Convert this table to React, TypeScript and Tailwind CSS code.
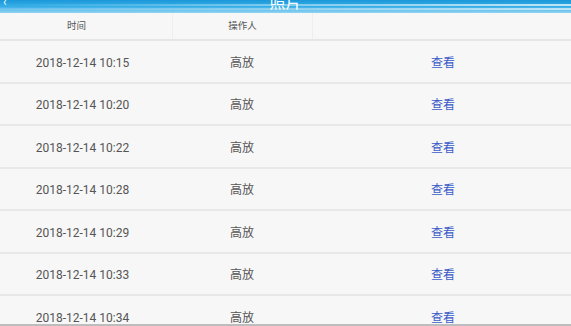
const records = [
  "2018-12-14 10:15",
  "2018-12-14 10:20",
  "2018-12-14 10:22",
  "2018-12-14 10:28",
  "2018-12-14 10:29",
  "2018-12-14 10:33",
  "2018-12-14 10:34",
];

export default function App() {
  return (
    <div className="w-[571px] h-[326px] flex flex-col bg-[#f7f7f7] overflow-hidden font-['Roboto','Noto_Sans_CJK_SC',sans-serif]">
      {/* Title bar (scrolled mostly off screen) */}
      <div className="relative h-[13px] shrink-0 overflow-hidden bg-gradient-to-b from-[#1b98da] via-[#33aee6] to-[#8fd3f2]">
        <div className="absolute inset-x-0 top-[4px] h-[2px] bg-gradient-to-r from-transparent via-white/40 to-white/70" />
        <div className="absolute inset-x-0 top-[8px] h-[2px] bg-gradient-to-r from-white/10 via-white/30 to-white/60" />
        <div className="absolute left-[3px] -top-[4px] text-white text-[12px] leading-none">‹</div>
        <div className="absolute inset-x-0 bottom-[1px] flex justify-center">
          <span className="text-white text-[16px] leading-none translate-y-[-1px]">照片</span>
        </div>
      </div>

      {/* Table header */}
      <div className="flex h-[28px] shrink-0 border-b-2 border-[#e6e6e6] text-[9.5px] text-[#555]">
        <div className="w-[173px] flex items-center justify-center pr-[19px] border-r border-[#eeeeee]">时间</div>
        <div className="w-[140px] flex items-center justify-center border-r border-[#eeeeee]">操作人</div>
        <div className="flex-1" />
      </div>

      {/* Rows */}
      <div className="flex-1 overflow-hidden">
        {records.map((time) => (
          <div
            key={time}
            className="flex h-[42.5px] items-center pt-[3px] border-b-2 border-[#e8e8e8] text-[12px] text-[#555]"
          >
            <div className="w-[165px] text-center">{time}</div>
            <div className="w-[154px] text-center">高放</div>
            <div className="flex-1 text-center pr-[4px] text-[#3a5bc7]">查看</div>
          </div>
        ))}
      </div>

      <div className="h-[2px] shrink-0 bg-[#bdbdbd]" />
    </div>
  );
}
